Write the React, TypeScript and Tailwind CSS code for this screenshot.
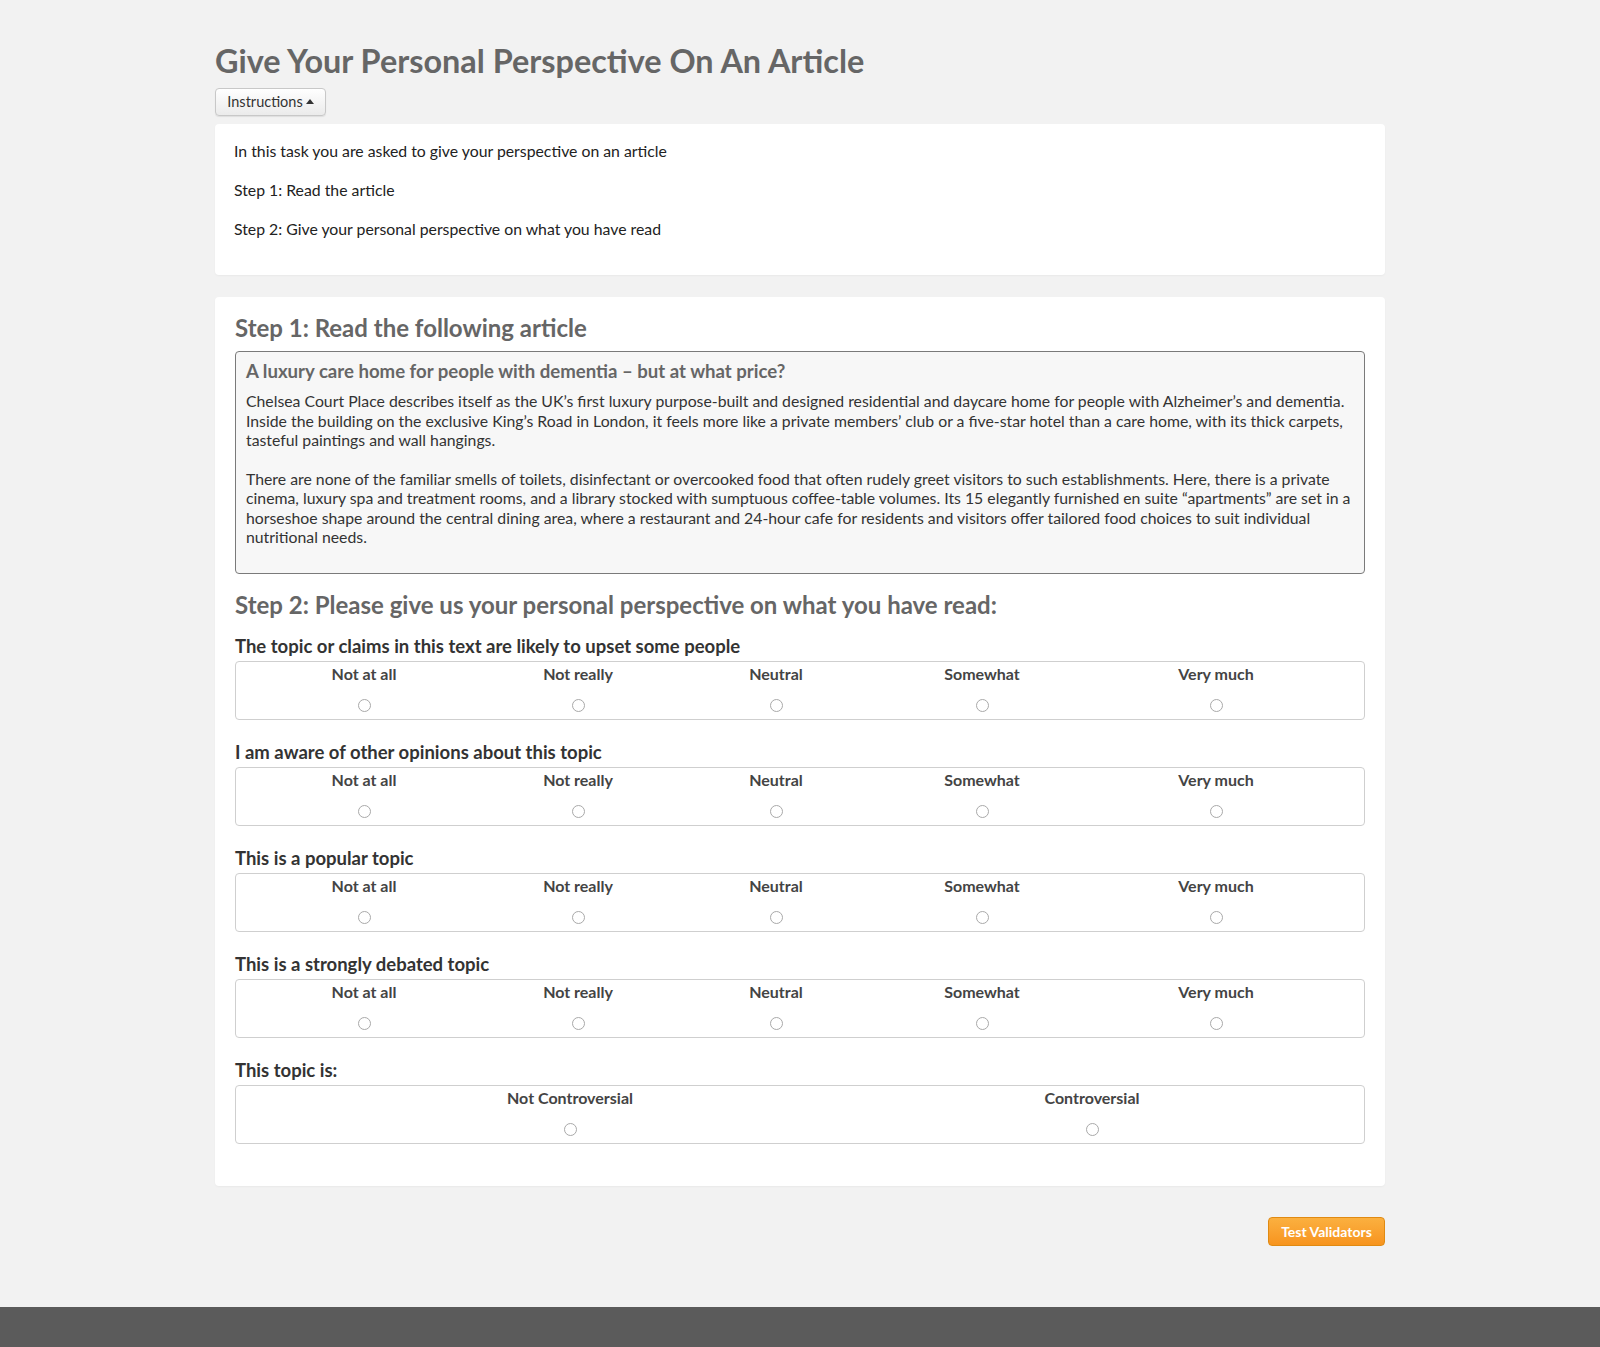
import React from "react";

const SCALE = ["Not at all", "Not really", "Neutral", "Somewhat", "Very much"];

const QUESTIONS = [
  "The topic or claims in this text are likely to upset some people",
  "I am aware of other opinions about this topic",
  "This is a popular topic",
  "This is a strongly debated topic",
];

function Radio({ name }: { name: string }) {
  return (
    <input
      type="radio"
      name={name}
      className="appearance-none w-[13px] h-[13px] rounded-full border border-[#a9a9a9] bg-white block mx-auto mt-[15px]"
    />
  );
}

function ScaleRow({ name, options, cols }: { name: string; options: string[]; cols: string }) {
  return (
    <div className={`border border-[#cfcfcf] rounded-[4px] pt-[2px] pb-[7px] grid ${cols}`}>
      {options.map((opt) => (
        <div key={opt} className="text-center">
          <div className="h-[20px] leading-[20px] text-[16px] font-bold text-[#444]">{opt}</div>
          <Radio name={name} />
        </div>
      ))}
    </div>
  );
}

function Question({ label, children }: { label: string; children: React.ReactNode }) {
  return (
    <div className="mt-[20px] first:mt-0">
      <div className="h-[24px] leading-[24px] text-[18.5px] font-bold text-[#333] mb-[3px]">{label}</div>
      {children}
    </div>
  );
}

export default function App() {
  return (
    <div className="min-h-[1347px] bg-[#f2f2f2] font-['Lato',sans-serif] flex flex-col">
      <div className="w-[1170px] mx-auto pt-[41px] flex-1">
        <h1 className="text-[32.4px] leading-[40px] font-bold text-[#666]">
          Give Your Personal Perspective On An Article
        </h1>
        <button
          type="button"
          className="mt-[7px] h-[28px] w-[111px] flex items-center justify-center gap-[3px] rounded-[4px] border border-[#c8c8c8] bg-gradient-to-b from-white to-[#ebebeb] text-[14.5px] text-[#333] shadow-[0_1px_1px_rgba(0,0,0,0.08)]"
        >
          Instructions
          <svg width="8" height="5" viewBox="0 0 8 5" className="mt-[-1px]">
            <path d="M0 5 L4 0 L8 5 Z" fill="#333" />
          </svg>
        </button>

        <div className="mt-[8px] bg-white rounded-[4px] px-[19px] pt-[16px] pb-[36px] text-[15.8px] leading-[21px] text-[#222] shadow-[0_1px_2px_rgba(0,0,0,0.04)] flex flex-col gap-[18px]">
          <p>In this task you are asked to give your perspective on an article</p>
          <p>Step 1: Read the article</p>
          <p>Step 2: Give your personal perspective on what you have read</p>
        </div>

        <div className="mt-[22px] bg-white rounded-[4px] px-[20px] pt-[17px] pb-[42px] shadow-[0_1px_2px_rgba(0,0,0,0.04)]">
          <h2 className="text-[24px] leading-[28px] font-bold text-[#666]">Step 1: Read the following article</h2>
          <div className="mt-[9px] border border-[#7a7a7a] rounded-[4px] bg-[#f7f7f7] px-[10px] pt-[8px] pb-[26px]">
            <h3 className="text-[18.6px] leading-[22px] font-bold text-[#666]">
              A luxury care home for people with dementia – but at what price?
            </h3>
            <div className="mt-[9px] text-[15.8px] leading-[19.5px] text-[#333] flex flex-col gap-[19px]">
              <p>
                Chelsea Court Place describes itself as the UK’s first luxury purpose-built and designed residential and
                daycare home for people with Alzheimer’s and dementia. Inside the building on the exclusive King’s Road in
                London, it feels more like a private members’ club or a five-star hotel than a care home, with its thick
                carpets, tasteful paintings and wall hangings.
              </p>
              <p>
                There are none of the familiar smells of toilets, disinfectant or overcooked food that often rudely greet
                visitors to such establishments. Here, there is a private cinema, luxury spa and treatment rooms, and a
                library stocked with sumptuous coffee-table volumes. Its 15 elegantly furnished en suite “apartments” are
                set in a horseshoe shape around the central dining area, where a restaurant and 24-hour cafe for residents
                and visitors offer tailored food choices to suit individual nutritional needs.
              </p>
            </div>
          </div>

          <h2 className="mt-[17px] text-[24px] leading-[28px] font-bold text-[#666]">
            Step 2: Please give us your personal perspective on what you have read:
          </h2>

          <div className="mt-[15px]">
            {QUESTIONS.map((q, i) => (
              <Question key={q} label={q}>
                <ScaleRow name={`q${i}`} options={SCALE} cols="grid-cols-[256px_172px_224px_188px_280px]" />
              </Question>
            ))}
            <Question label="This topic is:">
              <ScaleRow
                name="controversial"
                options={["Not Controversial", "Controversial"]}
                cols="grid-cols-[668px_376px]"
              />
            </Question>
          </div>
        </div>

        <div className="mt-[31px] flex justify-end">
          <button
            type="button"
            className="h-[29px] w-[117px] rounded-[4px] border border-[#e08a12] bg-gradient-to-b from-[#fbb03f] to-[#f7941d] text-white text-[14px] font-bold"
          >
            Test Validators
          </button>
        </div>
      </div>
      <div className="h-[40px] bg-[#5b5b5b]" />
    </div>
  );
}
